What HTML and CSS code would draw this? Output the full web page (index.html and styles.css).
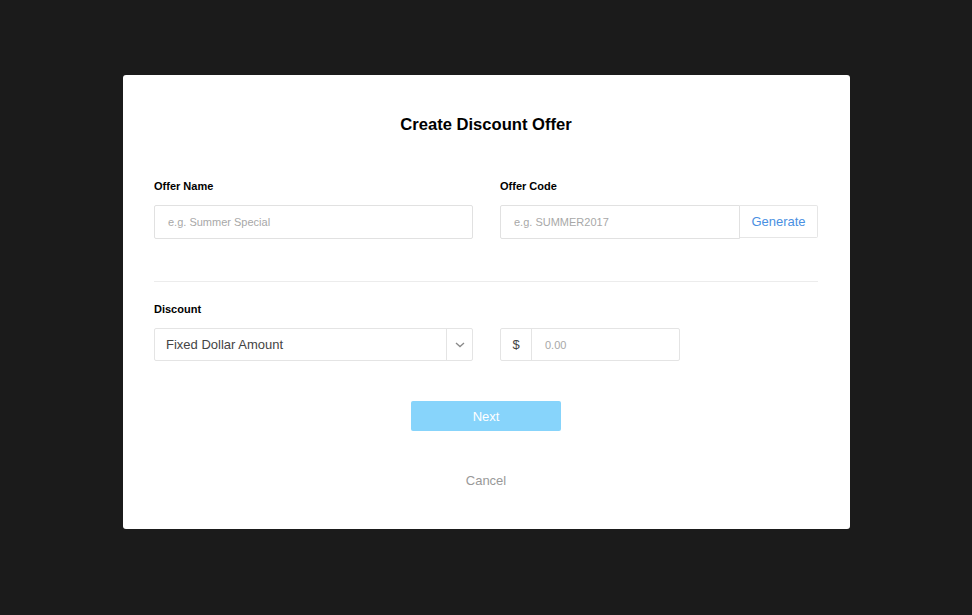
FILE: index.html
```html
<!DOCTYPE html>
<html>
<head>
<meta charset="utf-8">
<link rel="stylesheet" href="styles.css">
</head>
<body>
<div class="modal">
  <h1 class="title">Create Discount Offer</h1>
  <div class="row top-row">
    <div class="field">
      <label class="label">Offer Name</label>
      <div class="input-box"><span class="placeholder">e.g. Summer Special</span></div>
    </div>
    <div class="field">
      <label class="label">Offer Code</label>
      <div class="group">
        <div class="input-box code-input"><span class="placeholder">e.g. SUMMER2017</span></div>
        <div class="generate">Generate</div>
      </div>
    </div>
  </div>
  <hr class="sep">
  <div class="row">
    <div class="field">
      <label class="label">Discount</label>
      <div class="select">
        <span class="select-text">Fixed Dollar Amount</span>
        <span class="chev"><svg width="10" height="6" viewBox="0 0 10 6"><path d="M1 1 L5 4.6 L9 1" fill="none" stroke="#8a8a8a" stroke-width="1.3"/></svg></span>
      </div>
    </div>
    <div class="field field-bottom">
      <div class="money">
        <span class="addon">$</span>
        <span class="money-input"><span class="placeholder">0.00</span></span>
      </div>
    </div>
  </div>
  <div class="actions">
    <div class="next">Next</div>
    <div class="cancel">Cancel</div>
  </div>
</div>
</body>
</html>
```

FILE: styles.css
```css
html, body {
  margin: 0;
  padding: 0;
  background: #1b1b1b;
  font-family: "Liberation Sans", Arial, sans-serif;
}
body {
  height: 615px;
  overflow: hidden;
}
.modal {
  box-sizing: border-box;
  width: 727px;
  margin: 75px auto 0 123px;
  background: #fff;
  border-radius: 3px;
  padding: 40px 32px 39px 31px;
}
.title {
  margin: 0;
  font-size: 16.6px;
  line-height: 20px;
  font-weight: bold;
  text-align: center;
  color: #000;
}
.row {
  display: grid;
  grid-template-columns: 319px 318px;
  column-gap: 27px;
}
.top-row {
  margin-top: 44px;
}
.field {
  display: flex;
  flex-direction: column;
}
.field-bottom {
  justify-content: flex-end;
}
.label {
  font-size: 11px;
  line-height: 14px;
  font-weight: bold;
  color: #000;
  margin-bottom: 12px;
}
.input-box {
  box-sizing: border-box;
  height: 34px;
  border: 1px solid #e1e1e1;
  border-radius: 2px;
  padding-left: 13px;
  display: flex;
  align-items: center;
}
.placeholder {
  font-size: 11px;
  color: #a8a8a8;
}
.group {
  display: flex;
  height: 34px;
}
.code-input {
  width: 240px;
  border-radius: 2px 0 0 2px;
}
.generate {
  box-sizing: border-box;
  flex: 1;
  height: 33px;
  border: 1px solid #e6e6e6;
  border-left: none;
  border-radius: 0 2px 2px 0;
  display: flex;
  align-items: center;
  justify-content: center;
  font-size: 13px;
  color: #4a90e2;
}
.sep {
  margin: 42px 0 0;
  border: none;
  border-top: 1px solid #ececec;
  height: 0;
}
.sep + .row {
  margin-top: 20px;
}
.select {
  box-sizing: border-box;
  height: 33px;
  border: 1px solid #e4e4e4;
  border-radius: 2px;
  display: flex;
  align-items: stretch;
}
.select-text {
  flex: 1;
  padding-left: 11px;
  display: flex;
  align-items: center;
  font-size: 13px;
  color: #444;
}
.chev {
  width: 25px;
  border-left: 1px solid #e4e4e4;
  display: flex;
  align-items: center;
  justify-content: center;
}
.money {
  box-sizing: border-box;
  width: 180px;
  height: 33px;
  border: 1px solid #e4e4e4;
  border-radius: 2px;
  display: flex;
}
.addon {
  width: 30px;
  border-right: 1px solid #e4e4e4;
  display: flex;
  align-items: center;
  justify-content: center;
  font-size: 13px;
  color: #444;
}
.money-input {
  flex: 1;
  padding-left: 13px;
  display: flex;
  align-items: center;
}
.actions {
  margin-top: 40px;
  display: flex;
  flex-direction: column;
  align-items: center;
}
.next {
  width: 150px;
  height: 30px;
  background: #87d4fb;
  border-radius: 2px;
  color: #fff;
  font-size: 13px;
  display: flex;
  align-items: center;
  justify-content: center;
}
.cancel {
  margin-top: 41px;
  font-size: 13px;
  line-height: 18px;
  color: #999;
}
```
